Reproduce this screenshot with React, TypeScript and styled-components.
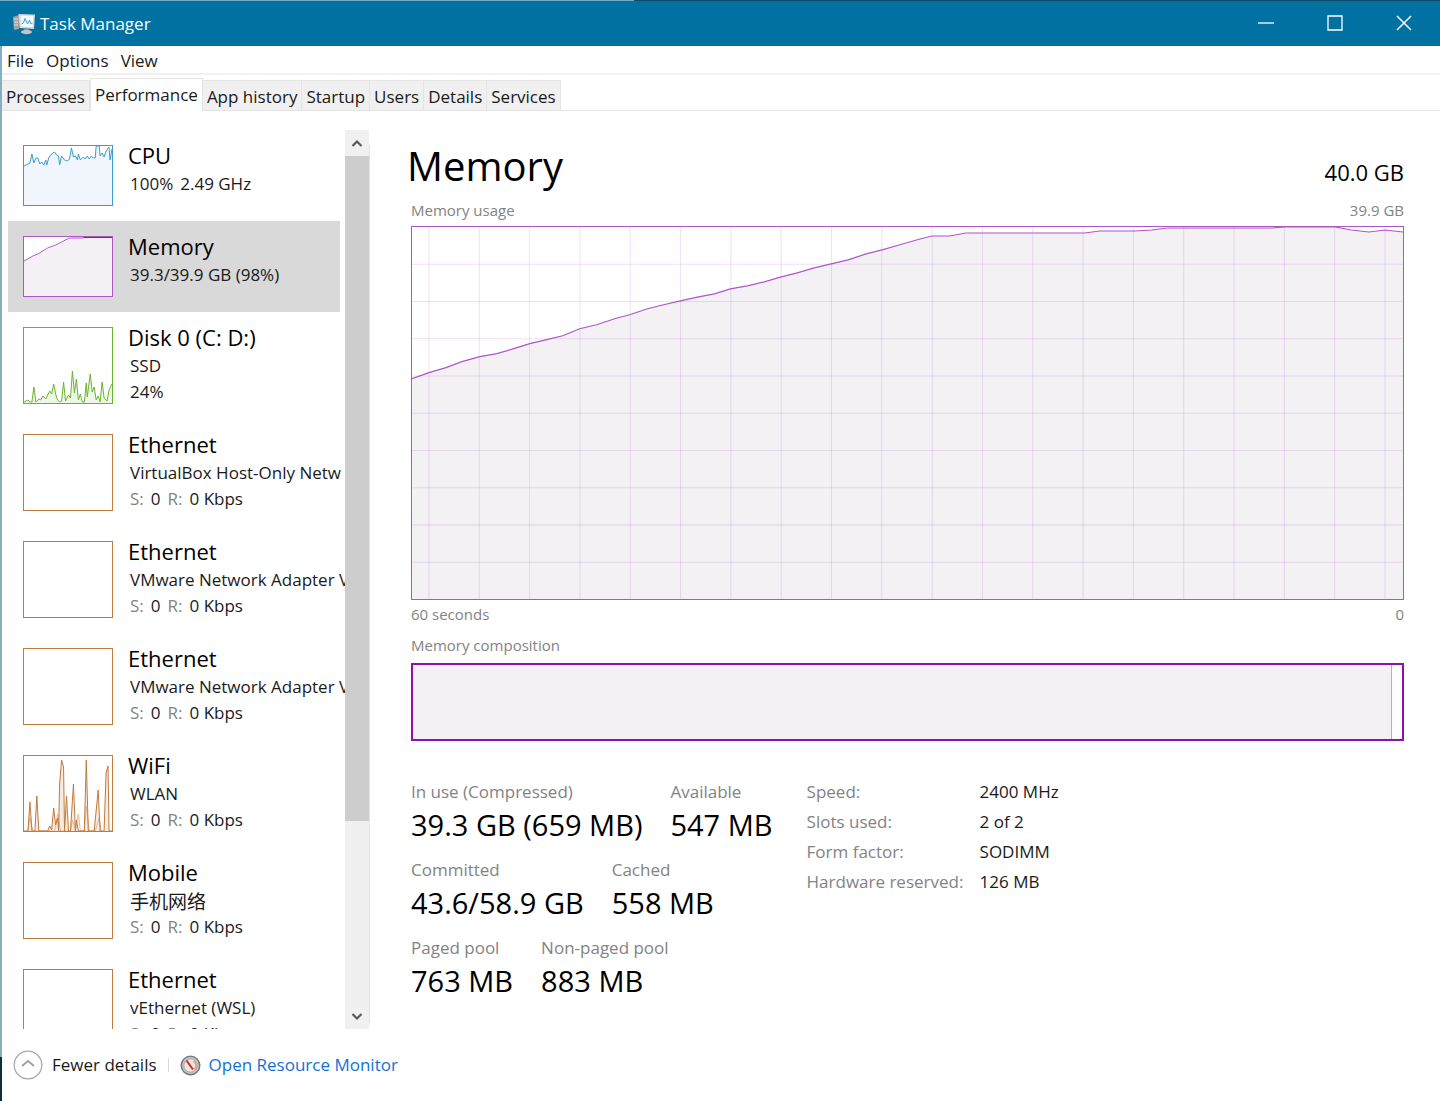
import React from "react";
import styled, { createGlobalStyle } from "styled-components";

const color = {
  title: "#0071a1",
  text: "#1a1a1a",
  muted: "#838383",
  line: "#e4e4e4",
  track: "#f0f0f0",
  thumb: "#cdcdcd",
  selected: "#d9d9d9",
  cpu: "#3a9bd1",
  memory: "#8b12ae",
  memorySoft: "#ae55c8",
  disk: "#6ab42d",
  network: "#c07a3c",
  link: "#1470d8",
};

const GlobalStyle = createGlobalStyle`
  *, *::before, *::after { box-sizing: border-box; }
  body {
    margin: 0;
    background: #fff;
    color: ${color.text};
    font-family: "Open Sans", "Noto Sans", "Noto Sans CJK SC", sans-serif;
    font-size: 17px;
    line-height: 26px;
  }
  button { font: inherit; color: inherit; background: none; border: 0; padding: 0; }
  h1, h2, p, dl, dd, ul { margin: 0; padding: 0; font-weight: 400; }
  ul { list-style: none; }
`;

const Window = styled.div`
  display: flex;
  flex-direction: column;
  height: 100vh;
  min-height: 900px;
  padding-left: 2px;
  background: linear-gradient(#fff, #fff) 2px 0 no-repeat,
    linear-gradient(#86aec3 96%, #0b2f40 96%);
`;

const TitleBar = styled.header`
  display: flex;
  align-items: center;
  height: 46px;
  flex: none;
  margin-left: -2px;
  padding: 1px 2px 0 12px;
  color: #fff;
  background: linear-gradient(90deg, #76a9c2 44%, #0c4c68 44%) 0 0 / 100% 1px no-repeat, ${color.title};
`;

const TitleText = styled.h1`
  flex: 1;
  margin-left: 4px;
  font-size: 17px;
  line-height: 26px;
`;

const CaptionButton = styled.button`
  display: grid;
  place-items: center;
  width: 69px;
  height: 44px;
  padding-bottom: 2px;
`;

const MenuBar = styled.nav`
  display: flex;
  gap: 12px;
  flex: none;
  height: 29px;
  padding: 2px 5px 0;
  border-bottom: 2px solid #f1f1f1;
`;

const TabBar = styled.div`
  display: flex;
  align-items: flex-end;
  flex: none;
  height: 36px;
  border-bottom: 1px solid ${color.line};
`;

const Tab = styled.button<{ $active?: boolean }>`
  height: ${(p) => (p.$active ? 33 : 30)}px;
  margin-bottom: ${(p) => (p.$active ? -1 : 0)}px;
  padding: ${(p) => (p.$active ? 0 : 2)}px 4px 0;
  border: 1px solid ${color.line};
  border-bottom: 0;
  border-left-width: ${(p) => (p.$active ? 1 : 0)}px;
  background: ${(p) => (p.$active ? "#fff" : color.track)};
`;

const Body = styled.div`
  display: flex;
  flex: 1;
  min-height: 0;
  padding-top: 19px;
`;

const Sidebar = styled.aside`
  display: flex;
  flex: none;
  width: 367px;
`;

const List = styled.ul`
  flex: 1;
  min-width: 0;
  overflow: hidden;
  padding-left: 6px;
`;

const Item = styled.button<{ $selected?: boolean }>`
  display: flex;
  align-items: flex-start;
  gap: 15px;
  width: 332px;
  padding: 9px 0 14px 15px;
  text-align: left;
  white-space: nowrap;
  background: ${(p) => (p.$selected ? color.selected : "transparent")};
`;

const Thumb = styled.span<{ $color: string; $tall: boolean }>`
  display: block;
  flex: none;
  width: 90px;
  height: ${(p) => (p.$tall ? 77 : 61)}px;
  margin: 6px 0 1px;
  border: 1px solid ${(p) => p.$color};
  background: #fff;
  svg { display: block; width: 100%; height: 100%; }
`;

const ItemName = styled.span`
  display: block;
  font-size: 22px;
  line-height: 32px;
  color: #000;
`;

const ItemLine = styled.span`
  display: flex;
  gap: 7px;
  padding-left: 2px;
`;

const Han = styled.span`
  font-family: "Noto Sans CJK SC", sans-serif;
  font-size: 19px;
`;

const Muted = styled.span`
  color: ${color.muted};
`;

const ScrollBar = styled.div`
  display: flex;
  flex-direction: column;
  width: 24px;
  background: ${color.track};
`;

const ScrollButton = styled.button`
  display: grid;
  place-items: center;
  height: 26px;
  color: #5a5a5a;
`;

const ScrollThumb = styled.div`
  flex: 666;
  background: ${color.thumb};
`;

const ScrollRest = styled.div`
  flex: 182;
`;

const Main = styled.main`
  display: flex;
  flex-direction: column;
  flex: 1;
  min-width: 0;
  margin: 15px 0 6px;
  padding: 0 36px 10px 41px;
  border-left: 1px solid ${color.line};
`;

const Heading = styled.div`
  display: flex;
  justify-content: space-between;
  align-items: baseline;
  height: 53px;
  color: #000;
`;

const Title = styled.h2`
  margin-left: -4px;
  font-size: 40px;
  line-height: 42px;
`;

const Capacity = styled.span`
  font-size: 22px;
`;

const Caption = styled.div`
  display: flex;
  justify-content: space-between;
  flex: none;
  font-size: 15px;
  line-height: 24px;
  color: ${color.muted};
`;

const ChartCaption = styled(Caption)`
  padding-bottom: 4px;
`;

const AxisCaption = styled(Caption)`
  padding-top: 2px;
`;

const CompositionCaption = styled(Caption)`
  padding: 7px 0 6px;
`;

const ChartFrame = styled.div`
  display: flex;
  flex: 1;
  min-height: 0;
  border: 1px solid ${color.memorySoft};
  svg { flex: 1; width: 100%; min-height: 0; }
`;

const Composition = styled.div`
  display: flex;
  flex: none;
  height: 78px;
  border: 2px solid ${color.memory};
`;

const InUse = styled.div`
  width: 99%;
  border-right: 1px solid #c9a3d6;
  background: #f4f1f5;
`;

const Stats = styled.section`
  display: flex;
  gap: 34px;
  flex: none;
  padding-top: 38px;
`;

const StatRows = styled.div`
  display: flex;
  flex-direction: column;
`;

const StatRow = styled.dl`
  display: flex;
  gap: 28px;
  height: 78px;
`;

const StatLabel = styled.dt`
  color: ${color.muted};
`;

const StatValue = styled.dd`
  font-size: 29px;
  line-height: 40px;
  color: #000;
`;

const Specs = styled.table`
  align-self: flex-start;
  border-collapse: collapse;
  margin-top: -2px;
  th, td { padding: 0; height: 30px; text-align: left; font-weight: 400; }
  th { width: 173px; color: ${color.muted}; }
`;

const Footer = styled.footer`
  display: flex;
  align-items: center;
  flex: none;
  height: 72px;
  padding: 2px 11px;
`;

const Fewer = styled.button`
  display: flex;
  align-items: center;
  gap: 9px;
`;

const Divider = styled.span`
  width: 1px;
  height: 14px;
  margin: 0 11px;
  background: #d9d9d9;
`;

const MonitorLink = styled.a`
  display: flex;
  align-items: center;
  gap: 8px;
  color: ${color.link};
  text-decoration: none;
`;

type Resource = {
  name: string;
  lines: React.ReactNode[];
  color: string;
  tall: boolean;
  selected?: boolean;
  graph?: React.ReactNode;
};

const rates = (
  <>
    <Muted>S:</Muted>0<Muted>R:</Muted>0 Kbps
  </>
);

const cpuLine =
  "0,20 4,18 6,17 8,8 10,17 12,12 14,12 16,18 18,16 20,19 22,14 23,19 25,12 27,9 29,7 31,6 33,9 35,10 36,19 38,10 41,14 44,15 46,13 48,2 50,11 52,10 54,14 55,8 57,14 60,11 62,13 64,10 66,13 68,10 70,12 72,12 73,0 76,0 77,10 79,7 81,11 83,5 86,1 87,14 89,3";
const diskLine =
  "0,74 4,72 6,74 8,74 10,59 12,74 15,71 17,72 19,68 22,71 24,67 26,63 28,66 30,56 32,66 34,72 36,74 38,73 40,54 42,73 45,67 47,70 49,43 51,65 53,51 55,72 57,66 59,74 61,74 63,55 64,69 67,46 69,64 71,59 73,72 75,68 77,74 79,54 81,70 84,73 86,62 89,56";
const wifiLine =
  "0,75 4,75 6,46 8,75 11,75 13,40 15,75 24,75 26,70 28,74 30,52 32,69 34,62 35,75 36,28 38,4 40,11 41,75 43,40 45,75 47,75 50,28 52,75 53,64 55,75 61,75 63,4 65,75 71,75 75,34 77,75 81,75 83,17 85,10 86,75 89,75";

const area = (points: string, w: number, h: number) => `0,${h} ${points} ${w},${h}`;

const resources: Resource[] = [
  {
    name: "CPU",
    lines: [<>100%<span>2.49 GHz</span></>],
    color: color.cpu,
    tall: false,
    graph: (
      <>
        <polygon points={area(cpuLine, 89, 59)} fill="#f0f6fb" />
        <polyline points={cpuLine} fill="none" stroke={color.cpu} />
      </>
    ),
  },
  {
    name: "Memory",
    lines: ["39.3/39.9 GB (98%)"],
    color: color.memorySoft,
    tall: false,
    selected: true,
    graph: (
      <>
        <polygon points="0,59 0,24 48,1 60,0 89,0 89,59" fill="#f4f1f5" />
        <polyline points="0,24 9,19 14,17 24,11 32,8 46,1 60,1" fill="none" stroke={color.memorySoft} />
        <path d="M60 .5H89" stroke={color.memory} />
      </>
    ),
  },
  {
    name: "Disk 0 (C: D:)",
    lines: ["SSD", "24%"],
    color: color.disk,
    tall: true,
    graph: (
      <>
        <polygon points={area(diskLine, 89, 75)} fill="#eef6e8" />
        <polyline points={diskLine} fill="none" stroke={color.disk} />
      </>
    ),
  },
  { name: "Ethernet", lines: ["VirtualBox Host-Only Netw", rates], color: color.network, tall: true },
  { name: "Ethernet", lines: ["VMware Network Adapter V", rates], color: color.network, tall: true },
  { name: "Ethernet", lines: ["VMware Network Adapter V", rates], color: color.network, tall: true },
  {
    name: "WiFi",
    lines: ["WLAN", rates],
    color: color.network,
    tall: true,
    graph: (
      <>
        <polygon points={area(wifiLine, 89, 75)} fill="#f6ebe1" />
        <polyline points="4,75 6,62 9,75 31,75 34,58 37,75 47,75 49,64 52,74 55,58 57,75 61,75 63,50 66,75 72,75 76,62 78,75" fill="none" stroke="#e9b493" />
        <polyline points={wifiLine} fill="none" stroke={color.network} />
      </>
    ),
  },
  { name: "Mobile", lines: [<Han lang="zh">手机网络</Han>, rates], color: color.network, tall: true },
  { name: "Ethernet", lines: ["vEthernet (WSL)", rates], color: color.network, tall: true },
];

const usage =
  "0,152 17,146 34,141 50,135 68,130 85,127 102,122 118,117 135,113 151,109 168,102 185,98 203,92 218,88 236,82 252,78 269,74 287,70 303,67 319,62 336,59 353,55 370,50 386,46 403,41 420,37 437,33 455,27 471,23 488,18 509,12 521,9 539,9 555,6 674,6 689,4 724,4 741,3 757,1 861,1 875,0 925,0 941,3 959,5 975,3 993,5";

const stats = [
  [["In use (Compressed)", "39.3 GB (659 MB)"], ["Available", "547 MB"]],
  [["Committed", "43.6/58.9 GB"], ["Cached", "558 MB"]],
  [["Paged pool", "763 MB"], ["Non-paged pool", "883 MB"]],
];

const specs = [
  ["Speed:", "2400 MHz"],
  ["Slots used:", "2 of 2"],
  ["Form factor:", "SODIMM"],
  ["Hardware reserved:", "126 MB"],
];

const tabs = ["Processes", "Performance", "App history", "Startup", "Users", "Details", "Services"];

const AppIcon = () => (
  <svg width="24" height="24" viewBox="0 0 24 24" aria-hidden="true">
    <path d="M1 5l6-2v14l-5 1z" fill="#9ea2a2" />
    <path d="M2 7h4M2 10h4M2 13h4" stroke="#dfe2e2" />
    <path d="M6.500 2l16.500.5-1 14.500-14.500-1z" fill="#d3d6d6" />
    <path d="M8.500 3.500l13 .5-1 11.500-11.500-1z" fill="#f5fbff" />
    <path d="M9.500 12l2-1 1.500-4.500 2.500 5.500 2-4 1.500 4 1.500-1" fill="none" stroke="#3d9bd8" />
    <path d="M12 16.500h5v2.500h-5z" fill="#8d9191" />
    <ellipse cx="14.500" cy="20" rx="5.500" ry="2.200" fill="#c3c6c4" />
  </svg>
);

const GaugeIcon = () => (
  <svg width="21" height="21" viewBox="0 0 21 21" aria-hidden="true">
    <circle cx="10.5" cy="10.5" r="9.2" fill="#c9cac7" stroke="#777b7b" strokeWidth="1.6" />
    <circle cx="10.5" cy="10.5" r="6.7" fill="#ebe7e2" stroke="#a9a9a6" />
    <path d="M13.500 6a5.500 5.500 0 0 1 1 8.500" fill="none" stroke="#e7a06b" strokeWidth="1.800" />
    <path d="M6.500 5.500l6.500 9" stroke="#d32626" strokeWidth="2" />
  </svg>
);

const Arrow = ({ down }: { down?: boolean }) => (
  <svg width="12" height="9" viewBox="0 0 12 9" aria-hidden="true">
    <path d={down ? "M1.5 2L6 6.5 10.5 2" : "M1.5 7L6 2.5 10.5 7"} fill="none" stroke="currentColor" strokeWidth="2.2" />
  </svg>
);

export default function App() {
  return (
    <>
      <GlobalStyle />
      <Window>
        <TitleBar>
          <AppIcon />
          <TitleText>Task Manager</TitleText>
          <CaptionButton aria-label="Minimize">
            <svg width="16" height="16"><path d="M0 8h16" stroke="#fff" strokeWidth="1.3" /></svg>
          </CaptionButton>
          <CaptionButton aria-label="Maximize">
            <svg width="16" height="16"><path d="M1 1h14v14H1z" fill="none" stroke="#fff" strokeWidth="1.3" /></svg>
          </CaptionButton>
          <CaptionButton aria-label="Close">
            <svg width="16" height="16"><path d="M1 1l14 14M15 1L1 15" stroke="#fff" strokeWidth="1.5" /></svg>
          </CaptionButton>
        </TitleBar>
        <MenuBar aria-label="Menu">
          <button>File</button>
          <button>Options</button>
          <button>View</button>
        </MenuBar>
        <TabBar role="tablist">
          {tabs.map((t) => (
            <Tab key={t} role="tab" aria-selected={t === "Performance"} $active={t === "Performance"}>
              {t}
            </Tab>
          ))}
        </TabBar>
        <Body>
          <Sidebar>
            <List>
              {resources.map((r, i) => (
                <li key={i}>
                  <Item $selected={r.selected} aria-pressed={!!r.selected}>
                    <Thumb $color={r.color} $tall={r.tall}>
                      <svg viewBox={r.tall ? "0 0 89 75" : "0 0 89 59"} preserveAspectRatio="none" aria-hidden="true">
                        {r.graph}
                      </svg>
                    </Thumb>
                    <span>
                      <ItemName>{r.name}</ItemName>
                      {r.lines.map((l, j) => (
                        <ItemLine key={j}>{l}</ItemLine>
                      ))}
                    </span>
                  </Item>
                </li>
              ))}
            </List>
            <ScrollBar>
              <ScrollButton aria-label="Scroll up"><Arrow /></ScrollButton>
              <ScrollThumb />
              <ScrollRest />
              <ScrollButton aria-label="Scroll down"><Arrow down /></ScrollButton>
            </ScrollBar>
          </Sidebar>
          <Main>
            <Heading>
              <Title>Memory</Title>
              <Capacity>40.0 GB</Capacity>
            </Heading>
            <ChartCaption>
              <span>Memory usage</span>
              <span>39.9 GB</span>
            </ChartCaption>
            <ChartFrame>
              <svg viewBox="0 0 993 373" preserveAspectRatio="none" role="img" aria-label="Memory usage over 60 seconds">
                <polygon points={area(usage, 993, 373)} fill="#f4f1f5" />
                {Array.from({ length: 20 }, (_, i) => (
                  <path key={i} d={`M${17 + i * 50.42} 0V373`} stroke={color.memory} strokeOpacity=".13" vectorEffect="non-scaling-stroke" />
                ))}
                {Array.from({ length: 9 }, (_, i) => (
                  <path key={i} d={`M0 ${(i + 1) * 37.35}H993`} stroke={color.memory} strokeOpacity=".13" vectorEffect="non-scaling-stroke" />
                ))}
                <polyline points={usage} fill="none" stroke={color.memorySoft} strokeWidth="1.2" vectorEffect="non-scaling-stroke" />
              </svg>
            </ChartFrame>
            <AxisCaption>
              <span>60 seconds</span>
              <span>0</span>
            </AxisCaption>
            <CompositionCaption>Memory composition</CompositionCaption>
            <Composition>
              <InUse />
            </Composition>
            <Stats>
              <StatRows>
                {stats.map((row, i) => (
                  <StatRow key={i}>
                    {row.map(([label, value]) => (
                      <div key={label}>
                        <StatLabel>{label}</StatLabel>
                        <StatValue>{value}</StatValue>
                      </div>
                    ))}
                  </StatRow>
                ))}
              </StatRows>
              <Specs>
                <tbody>
                  {specs.map(([label, value]) => (
                    <tr key={label}>
                      <th scope="row">{label}</th>
                      <td>{value}</td>
                    </tr>
                  ))}
                </tbody>
              </Specs>
            </Stats>
          </Main>
        </Body>
        <Footer>
          <Fewer>
            <svg width="30" height="30" viewBox="0 0 30 30" aria-hidden="true">
              <circle cx="15" cy="15" r="13.8" fill="none" stroke="#a8a8a8" strokeWidth="1.3" />
              <path d="M9 16l6-5 6 5" fill="none" stroke="#a0a0a0" strokeWidth="1.8" />
            </svg>
            Fewer details
          </Fewer>
          <Divider />
          <MonitorLink href="#resource-monitor">
            <GaugeIcon />
            Open Resource Monitor
          </MonitorLink>
        </Footer>
      </Window>
    </>
  );
}
